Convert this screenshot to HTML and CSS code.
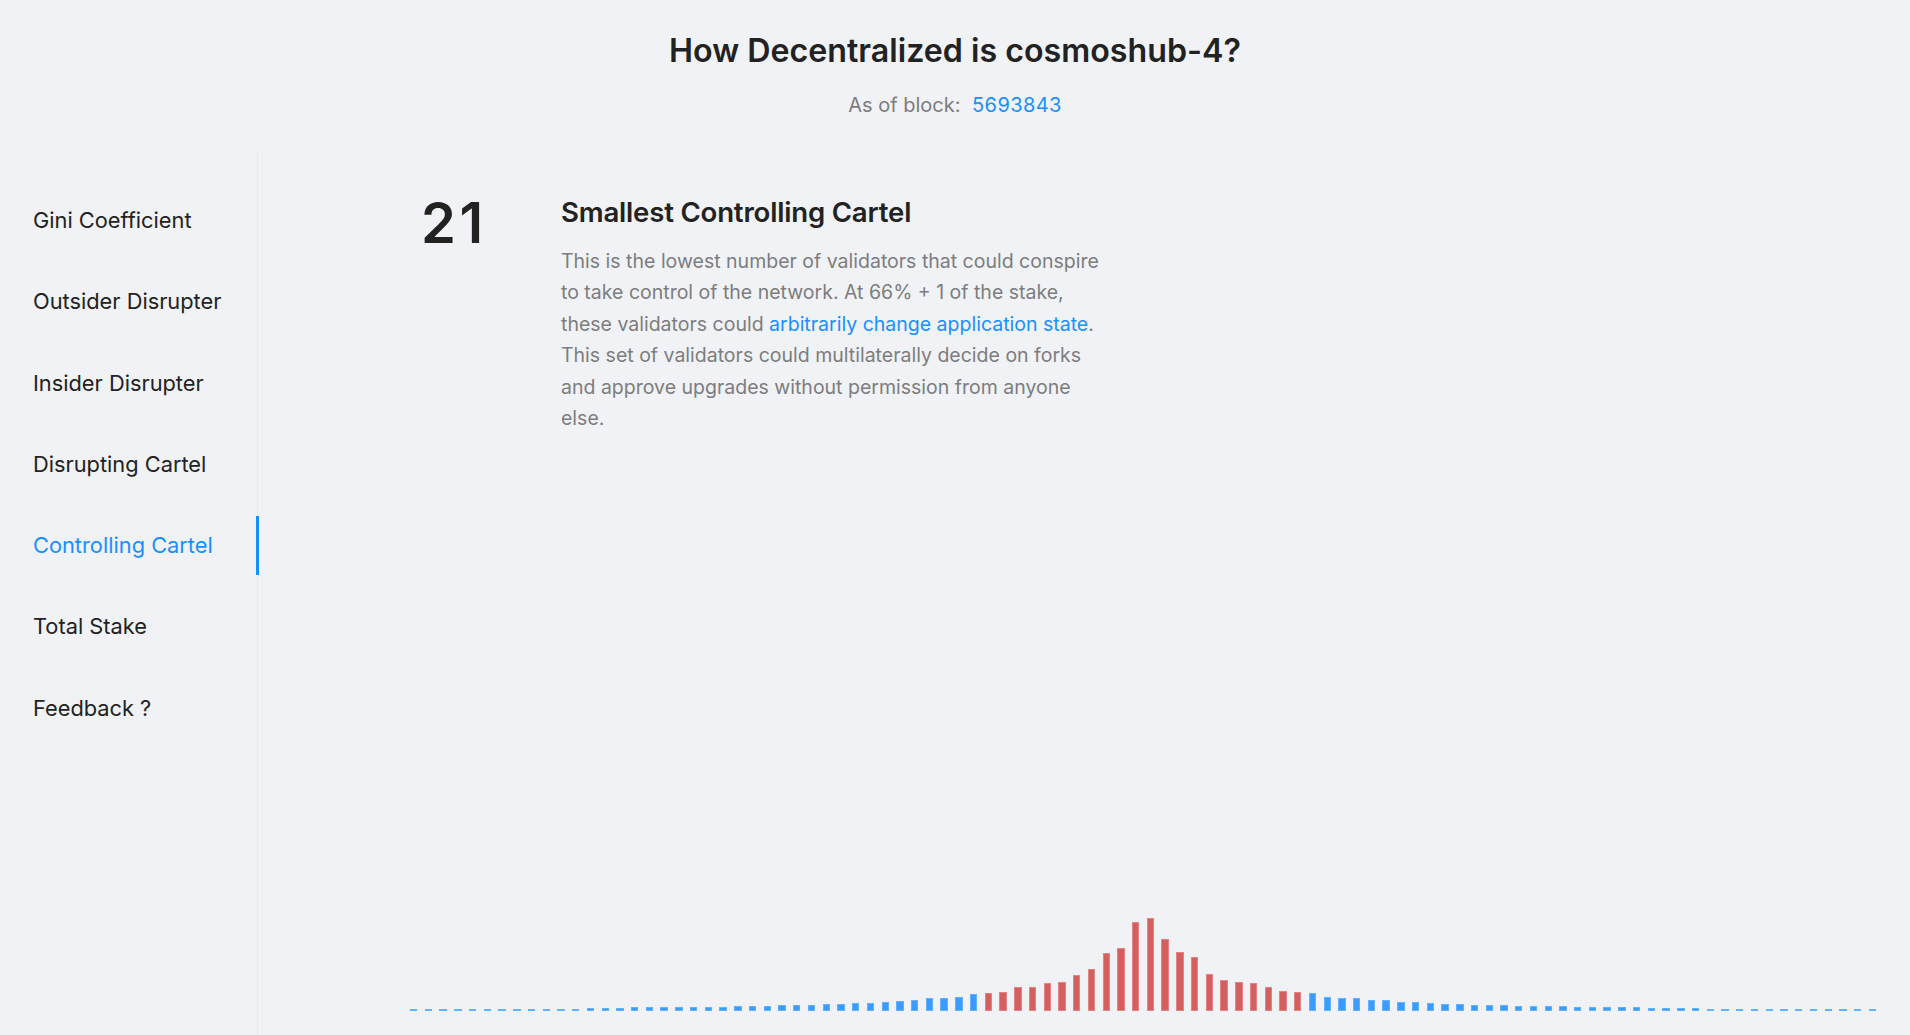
FILE: index.html
```html
<!DOCTYPE html>
<html lang="en">
<head>
<meta charset="utf-8">
<title>How Decentralized is cosmoshub-4?</title>
<link rel="stylesheet" href="styles.css">
</head>
<body>
<header class="page-header">
  <h1 class="page-title">How Decentralized is cosmoshub-4?</h1>
  <p class="block-info"><span class="block-label">As of block:</span> <a class="block-link" href="#">5693843</a></p>
</header>
<div class="layout">
  <nav class="sider">
    <ul class="menu">
      <li class="menu-item">Gini Coefficient</li>
      <li class="menu-item">Outsider Disrupter</li>
      <li class="menu-item">Insider Disrupter</li>
      <li class="menu-item">Disrupting Cartel</li>
      <li class="menu-item is-active">Controlling Cartel</li>
      <li class="menu-item">Total Stake</li>
      <li class="menu-item">Feedback ?</li>
    </ul>
  </nav>
  <main class="main">
    <section class="metric">
      <div class="metric-value">21</div>
      <div class="metric-body">
        <h2 class="metric-title">Smallest Controlling Cartel</h2>
        <p class="metric-text">This is the lowest number of validators that could conspire to take control of the network. At 66% + 1 of the stake, these validators could <a class="text-link" href="#">arbitrarily change application state</a>. This set of validators could multilaterally decide on forks and approve upgrades without permission from anyone else.</p>
      </div>
    </section>
    <div class="chart">
      <div class="bar" style="height:1px"></div>
      <div class="bar" style="height:1px"></div>
      <div class="bar" style="height:1px"></div>
      <div class="bar" style="height:1px"></div>
      <div class="bar" style="height:1.3px"></div>
      <div class="bar" style="height:1.3px"></div>
      <div class="bar" style="height:1.7px"></div>
      <div class="bar" style="height:2px"></div>
      <div class="bar" style="height:2.3px"></div>
      <div class="bar" style="height:2.3px"></div>
      <div class="bar" style="height:2.3px"></div>
      <div class="bar" style="height:2.3px"></div>
      <div class="bar" style="height:3px"></div>
      <div class="bar" style="height:3.3px"></div>
      <div class="bar" style="height:3.3px"></div>
      <div class="bar" style="height:3.7px"></div>
      <div class="bar" style="height:4px"></div>
      <div class="bar" style="height:4px"></div>
      <div class="bar" style="height:4px"></div>
      <div class="bar" style="height:4px"></div>
      <div class="bar" style="height:4px"></div>
      <div class="bar" style="height:4.3px"></div>
      <div class="bar" style="height:5px"></div>
      <div class="bar" style="height:5px"></div>
      <div class="bar" style="height:5.3px"></div>
      <div class="bar" style="height:5.7px"></div>
      <div class="bar" style="height:6px"></div>
      <div class="bar" style="height:6px"></div>
      <div class="bar" style="height:6.7px"></div>
      <div class="bar" style="height:7px"></div>
      <div class="bar" style="height:7.7px"></div>
      <div class="bar" style="height:8.3px"></div>
      <div class="bar" style="height:8.7px"></div>
      <div class="bar" style="height:9.7px"></div>
      <div class="bar" style="height:10.7px"></div>
      <div class="bar" style="height:12.7px"></div>
      <div class="bar" style="height:13px"></div>
      <div class="bar" style="height:13.7px"></div>
      <div class="bar" style="height:17px"></div>
      <div class="bar is-cartel" style="height:17.7px"></div>
      <div class="bar is-cartel" style="height:19.3px"></div>
      <div class="bar is-cartel" style="height:23.7px"></div>
      <div class="bar is-cartel" style="height:24.3px"></div>
      <div class="bar is-cartel" style="height:28px"></div>
      <div class="bar is-cartel" style="height:29.3px"></div>
      <div class="bar is-cartel" style="height:36px"></div>
      <div class="bar is-cartel" style="height:41.7px"></div>
      <div class="bar is-cartel" style="height:58.3px"></div>
      <div class="bar is-cartel" style="height:62.7px"></div>
      <div class="bar is-cartel" style="height:89.3px"></div>
      <div class="bar is-cartel" style="height:93px"></div>
      <div class="bar is-cartel" style="height:72px"></div>
      <div class="bar is-cartel" style="height:59px"></div>
      <div class="bar is-cartel" style="height:53.7px"></div>
      <div class="bar is-cartel" style="height:36.7px"></div>
      <div class="bar is-cartel" style="height:31.3px"></div>
      <div class="bar is-cartel" style="height:29px"></div>
      <div class="bar is-cartel" style="height:27.7px"></div>
      <div class="bar is-cartel" style="height:23.7px"></div>
      <div class="bar is-cartel" style="height:20px"></div>
      <div class="bar is-cartel" style="height:18.7px"></div>
      <div class="bar" style="height:17.7px"></div>
      <div class="bar" style="height:14.3px"></div>
      <div class="bar" style="height:13.3px"></div>
      <div class="bar" style="height:12.7px"></div>
      <div class="bar" style="height:11px"></div>
      <div class="bar" style="height:10.7px"></div>
      <div class="bar" style="height:9.3px"></div>
      <div class="bar" style="height:8.7px"></div>
      <div class="bar" style="height:7.7px"></div>
      <div class="bar" style="height:7px"></div>
      <div class="bar" style="height:6.7px"></div>
      <div class="bar" style="height:6px"></div>
      <div class="bar" style="height:5.7px"></div>
      <div class="bar" style="height:5.7px"></div>
      <div class="bar" style="height:5.3px"></div>
      <div class="bar" style="height:5px"></div>
      <div class="bar" style="height:5px"></div>
      <div class="bar" style="height:4.7px"></div>
      <div class="bar" style="height:4px"></div>
      <div class="bar" style="height:4px"></div>
      <div class="bar" style="height:4px"></div>
      <div class="bar" style="height:4px"></div>
      <div class="bar" style="height:3.7px"></div>
      <div class="bar" style="height:3.3px"></div>
      <div class="bar" style="height:3.3px"></div>
      <div class="bar" style="height:2.7px"></div>
      <div class="bar" style="height:2.7px"></div>
      <div class="bar" style="height:2.3px"></div>
      <div class="bar" style="height:2px"></div>
      <div class="bar" style="height:2px"></div>
      <div class="bar" style="height:2px"></div>
      <div class="bar" style="height:1.7px"></div>
      <div class="bar" style="height:1.7px"></div>
      <div class="bar" style="height:1px"></div>
      <div class="bar" style="height:1px"></div>
      <div class="bar" style="height:1px"></div>
      <div class="bar" style="height:1px"></div>
      <div class="bar" style="height:1px"></div>
      <div class="bar" style="height:1px"></div>
    </div>
  </main>
</div>
</body>
</html>
```
FILE: styles.css
```css
* { box-sizing: border-box; }

html, body {
  margin: 0;
  padding: 0;
}

body {
  background: #f0f2f5;
  color: #262626;
  font-family: Inter, "Noto Sans", "Liberation Sans", sans-serif;
  min-height: 100vh;
  display: flex;
  flex-direction: column;
}

a { color: #1890ff; text-decoration: none; }

.page-header {
  text-align: center;
  padding-top: 29px;
  height: 150px;
}

.page-title {
  margin: 0;
  font-size: 32.2px;
  line-height: 43px;
  font-weight: 600;
  color: #222;
  letter-spacing: 0;
}

.block-info {
  margin: 18px 0 0;
  font-size: 20px;
  line-height: 30px;
}

.block-label { color: #7c7c7e; }

.block-link { margin-left: 6px; letter-spacing: 0.4px; }

.layout {
  flex: 1;
  display: flex;
}

.sider {
  width: 258px;
  flex: none;
  border-right: 1px solid #e9eaee;
  padding-top: 41px;
}

.menu {
  list-style: none;
  margin: 0;
  padding: 0;
}

.menu-item {
  position: relative;
  height: 59px;
  line-height: 59px;
  margin-bottom: 22.3px;
  padding-left: 33px;
  font-size: 21.8px;
  color: #222;
}

.menu-item.is-active { color: #1890ff; }

.menu-item.is-active::after {
  content: "";
  position: absolute;
  right: -2px;
  top: 0;
  bottom: 0;
  width: 3px;
  background: #1890ff;
}

.main {
  flex: 1;
  display: flex;
  flex-direction: column;
  padding: 40px 33px 24px 152px;
}

.metric {
  display: flex;
}

.metric-value {
  width: 151px;
  padding-left: 11px;
  font-size: 56px;
  line-height: 67px;
  font-weight: 600;
  letter-spacing: 3.5px;
  color: #222;
}

.metric-body {
  width: 546px;
  padding-top: 4px;
}

.metric-title {
  margin: 0;
  font-size: 27.6px;
  line-height: 37px;
  font-weight: 600;
  color: #222;
  letter-spacing: -0.2px;
}

.metric-text {
  margin: 15px 0 0;
  font-size: 19.5px;
  line-height: 31.4px;
  color: #7c7d80;
}

.chart {
  margin-top: auto;
  height: 100px;
  display: flex;
  align-items: flex-end;
  justify-content: space-between;
}

.bar {
  width: 7.4px;
  min-height: 1px;
  background: #3a9cff;
  border: 1px solid rgba(120, 185, 255, 0.7);
}

.bar.is-cartel {
  background: #d45f5f;
  border-color: rgba(230, 140, 140, 0.8);
}
```
